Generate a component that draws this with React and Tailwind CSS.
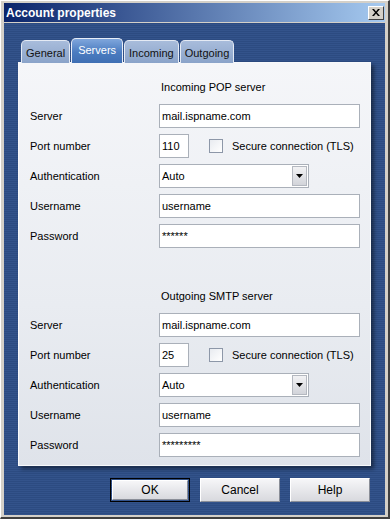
import React from 'react';

const TABS = ['General', 'Servers', 'Incoming', 'Outgoing'];

const SECTIONS = [
  { title: 'Incoming POP server', port: '110', password: '******' },
  { title: 'Outgoing SMTP server', port: '25', password: '*********' },
];

export default function App() {
  return (
    <div
      className="w-[390px] h-[519px] flex flex-col bg-[#d4d0c8] border-l border-t border-l-[#ffffff] border-t-[#ffffff] border-r-2 border-b-2 border-r-[#404040] border-b-[#404040] text-[11px] text-black overflow-hidden"
      style={{ fontFamily: '"Liberation Sans", Arial, sans-serif' }}
    >
      <div className="flex flex-col flex-1 pt-[2px] pl-[3px] pr-[3px] pb-[2px]">
        <TitleBar />
        <div className="h-px bg-[#d4d0c8]" />
        <div className="flex-1 flex flex-col bg-[repeating-linear-gradient(180deg,#2c4b81_0px,#2c4b81_1px,#33538b_1px,#33538b_2px)] px-[14px] pt-[15px]">
          <TabStrip />
          <Panel />
          <div className="flex justify-end gap-[10px] mt-[12px] pr-[1px]">
            <Button label="OK" primary />
            <Button label="Cancel" />
            <Button label="Help" />
          </div>
        </div>
      </div>
    </div>
  );
}

function TitleBar() {
  return (
    <div className="h-[19px] flex items-center justify-between pl-[2px] pr-[1px] bg-[linear-gradient(90deg,#0a246a,#a6caf0)]">
      <span className="text-white font-bold text-[12px] leading-none">Account properties</span>
      <button className="w-[16px] h-[14px] flex items-center justify-center bg-[#d4d0c8] border border-t-white border-l-white border-r-[#404040] border-b-[#404040]">
        <svg width="8" height="7" viewBox="0 0 8 7">
          <path d="M0 0h2l2 2.5L6 0h2L5 3.5 8 7H6L4 4.5 2 7H0l3-3.5z" fill="#000" />
        </svg>
      </button>
    </div>
  );
}

function TabStrip() {
  return (
    <div className="flex items-end h-[25px] pl-[3px] gap-[1px] -mb-px relative z-10">
      {TABS.map(t =>
        t === 'Servers' ? (
          <div
            key={t}
            className="h-[25px] px-[6px] pt-[4px] rounded-t-[5px] border border-b-0 border-[#e8eef8] bg-[linear-gradient(180deg,#7fa6dc,#4b7cc0_55%,#3f6fb4)] text-white text-[11px] leading-[14px]"
          >
            {t}
          </div>
        ) : (
          <div
            key={t}
            className="h-[23px] px-[4px] pt-[5px] rounded-t-[5px] border border-b-0 border-[#e4eaf4] bg-[linear-gradient(180deg,#a8bcdb,#8aa3c9)] text-[#111] text-[11px] leading-[14px]"
          >
            {t}
          </div>
        )
      )}
    </div>
  );
}

function Panel() {
  return (
    <div className="bg-[linear-gradient(180deg,#f5f6f9,#e9ecf1_60%,#dfe3ea)] border border-[#f8f9fb] shadow-[3px_3px_4px_rgba(0,0,0,0.45)] pl-[11px] pr-[10px] pt-[14px] pb-[8px] flex flex-col">
      {SECTIONS.map((s, i) => (
        <Section key={s.title} section={s} first={i === 0} />
      ))}
    </div>
  );
}

function Section({ section, first }) {
  return (
    <div className={first ? 'flex flex-col' : 'flex flex-col mt-[38px]'}>
      <div className="h-[20px] flex items-center pl-[131px]">{section.title}</div>
      <div className="flex flex-col gap-[6px] mt-[7px]">
        <Row label="Server">
          <TextBox value="mail.ispname.com" className="w-[202px]" />
        </Row>
        <Row label="Port number">
          <TextBox value={section.port} className="w-[30px]" />
          <div className="ml-[20px] w-[14px] h-[14px] border border-[#8d97a8] bg-[linear-gradient(135deg,#e8ebf0,#ffffff)]" />
          <span className="ml-[9px]">Secure connection (TLS)</span>
        </Row>
        <Row label="Authentication">
          <div className="w-[150px] h-[24px] flex items-center justify-between bg-white border border-[#aab0b9] pl-[2px] pr-[1px]">
            <span>Auto</span>
            <div className="w-[15px] h-[20px] flex items-center justify-center bg-[linear-gradient(180deg,#f2f2f4,#d2d4da)] border border-[#b4b8c0]">
              <svg width="7" height="4" viewBox="0 0 7 4">
                <path d="M0 0h7L3.5 4z" fill="#000" />
              </svg>
            </div>
          </div>
        </Row>
        <Row label="Username">
          <TextBox value="username" className="w-[202px]" />
        </Row>
        <Row label="Password">
          <TextBox value={section.password} className="w-[202px]" />
        </Row>
      </div>
    </div>
  );
}

function Row({ label, children }) {
  return (
    <div className="flex items-center h-[24px]">
      <span className="w-[129px] shrink-0">{label}</span>
      {children}
    </div>
  );
}

function TextBox({ value, className }) {
  return (
    <div className={`h-[24px] flex items-center bg-white border border-[#aab0b9] pl-[2px] ${className}`}>
      {value}
    </div>
  );
}

function Button({ label, primary }) {
  return (
    <div
      className={
        primary
          ? 'w-[80px] h-[24px] border border-black p-px'
          : 'w-[80px] h-[24px]'
      }
    >
      <div className="w-full h-full flex items-center justify-center bg-[linear-gradient(180deg,#f6f6f8,#d8d9de)] border border-t-[#ffffff] border-l-[#ffffff] border-r-[#8a8e98] border-b-[#8a8e98] text-[12px]">
        {label}
      </div>
    </div>
  );
}
